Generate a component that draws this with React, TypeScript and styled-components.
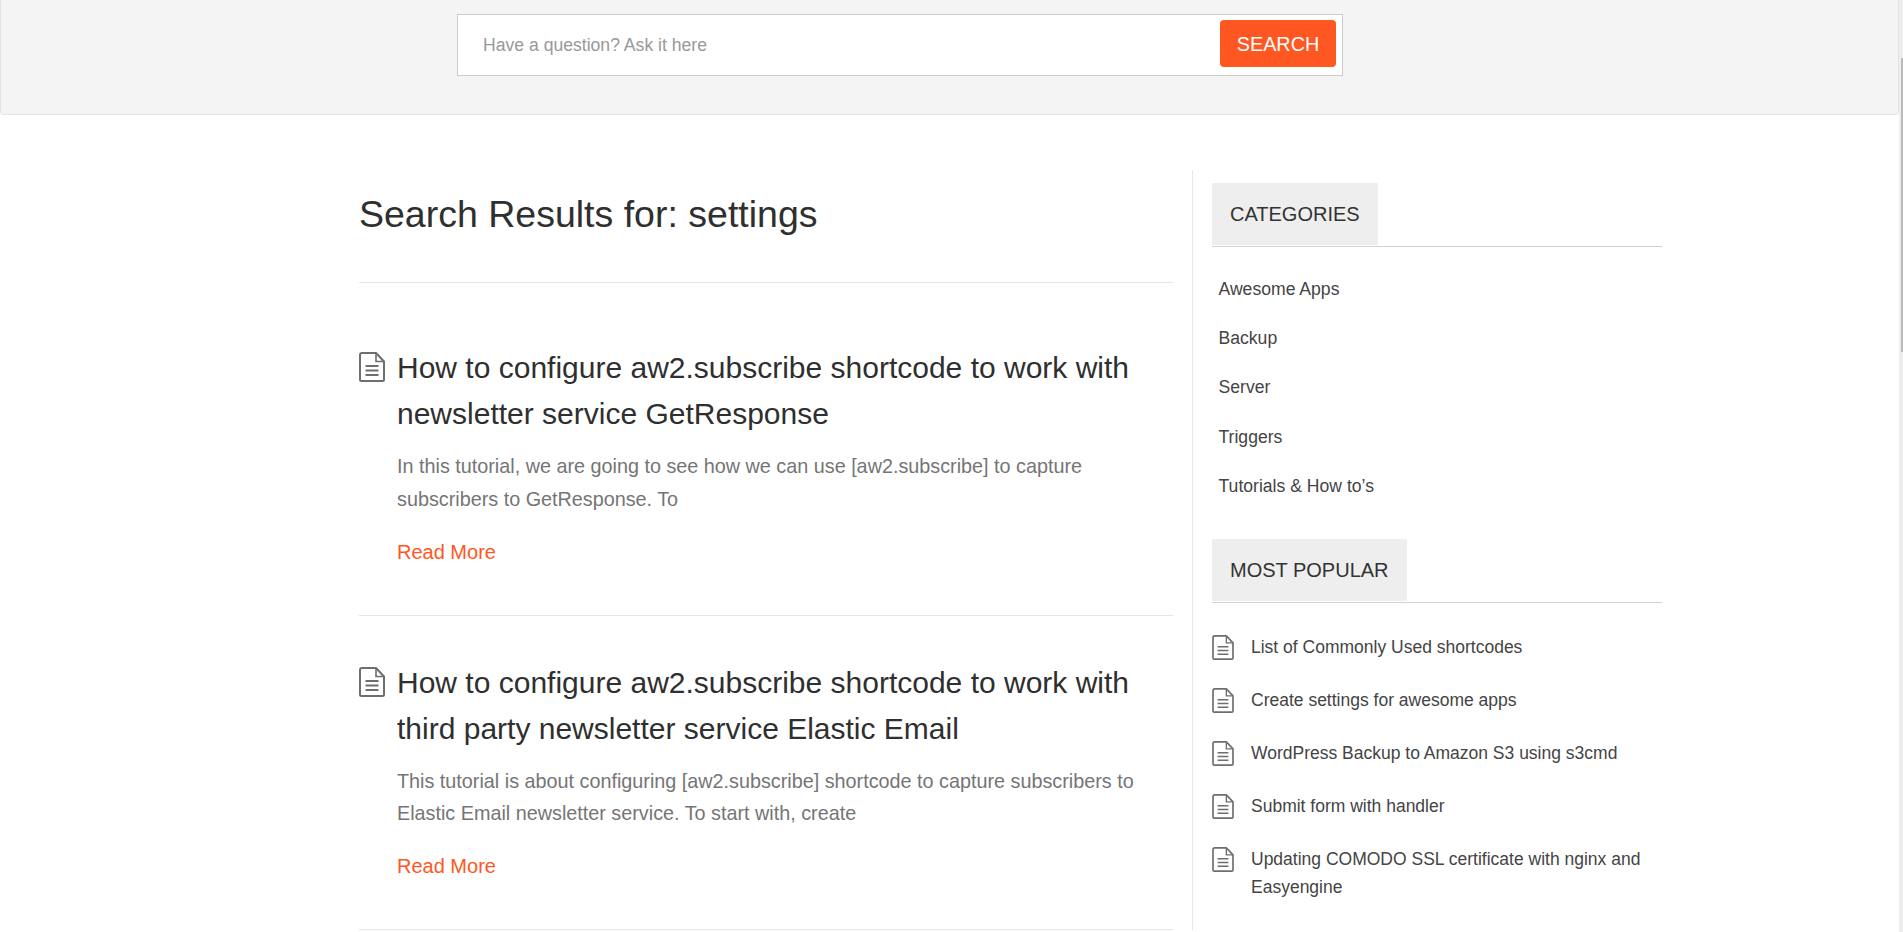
import React from "react";
import styled, { createGlobalStyle } from "styled-components";

const Global = createGlobalStyle`
  html, body { margin: 0; padding: 0; height: 932px; overflow: hidden; background: #fff; }
  body { font-family: "Liberation Sans", Arial, sans-serif; color: #333; }
`;

const Page = styled.div`
  position: relative;
  height: 932px;
  overflow: hidden;
`;

const ScrollTrack = styled.div`
  position: absolute;
  top: 0;
  right: 0;
  bottom: 0;
  width: 4px;
  background: #eeeeee;
`;

const ScrollThumb = styled.div`
  position: absolute;
  top: 58px;
  right: 0;
  width: 2px;
  height: 294px;
  background: #bbbbbb;
`;

const Banner = styled.header`
  box-sizing: border-box;
  width: 1899px;
  height: 115px;
  padding: 14px 0 0 456px;
  background: #f4f4f4;
  border: 1px solid #e3e3e3;
  border-top: 0;
  border-radius: 0 0 4px 4px;
  display: flex;
`;

const SearchForm = styled.form`
  box-sizing: border-box;
  width: 886px;
  height: 62px;
  background: #fff;
  border: 1px solid #ccc;
  display: flex;
  align-items: flex-start;
  justify-content: space-between;
  padding: 5px 6px 0 25px;
`;

const SearchInput = styled.input`
  flex: 1;
  height: 47px;
  margin-top: 2px;
  border: 0;
  outline: 0;
  background: transparent;
  font: 17.6px "Liberation Sans", Arial, sans-serif;
  color: #333;
  padding: 0;
  &::placeholder { color: #999; opacity: 1; }
`;

const SearchButton = styled.button`
  width: 116px;
  height: 47px;
  border: 0;
  border-radius: 4px;
  background: #ff5722;
  color: #fff;
  font: 19.8px "Liberation Sans", Arial, sans-serif;
  padding: 1px 0 0;
`;

const Layout = styled.div`
  display: flex;
  width: 1303px;
  margin: 55px 0 0 359px;
`;

const Main = styled.main`
  width: 814px;
  margin-right: 19px;
`;

const PageTitle = styled.h1`
  margin: 0 0 18px;
  padding: 24px 0 48px;
  font-size: 37.5px;
  line-height: 40px;
  font-weight: 400;
  color: #2f2f2f;
  border-bottom: 1px solid #e6e6e6;
`;

const Result = styled.article`
  position: relative;
  padding: 44px 0 48px 38px;
  border-bottom: 1px solid #e6e6e6;
`;

const ResultIcon = styled.span`
  position: absolute;
  left: 0;
  top: 51px;
  line-height: 0;
`;

const ResultTitle = styled.h2`
  margin: 0 0 13px;
  font-size: 30px;
  line-height: 46px;
  font-weight: 400;
  color: #2f2f2f;
`;

const Excerpt = styled.p`
  margin: 0 0 21px;
  font-size: 19.8px;
  line-height: 32.8px;
  color: #757575;
`;

const ReadMore = styled.a`
  display: block;
  font-size: 20px;
  line-height: 30px;
  color: #ff5722;
`;

const Sidebar = styled.aside`
  flex: 1;
  border-left: 1px solid #e6e6e6;
  padding: 13px 0 0 19px;
`;

const WidgetHead = styled.div`
  border-bottom: 1px solid #d2d2d2;
  margin-bottom: 18px;
`;

const WidgetTitle = styled.h3`
  display: inline-block;
  vertical-align: top;
  margin: 0 0 1px;
  padding: 0 18px;
  height: 62px;
  background: #eeeeee;
  font-size: 20px;
  line-height: 62px;
  font-weight: 400;
  color: #333;
`;

const CategoryList = styled.ul`
  list-style: none;
  margin: 0 0 28px;
  padding: 0 0 0 6.5px;
`;

const CategoryItem = styled.li`
  font-size: 17.6px;
  line-height: 49.2px;
  color: #444;
`;

const PopularList = styled.ul`
  list-style: none;
  margin: 0;
  padding: 0;
`;

const PopularItem = styled.li`
  display: flex;
  gap: 17px;
  padding: 12px 0 13px;
  font-size: 17.5px;
  line-height: 28px;
  color: #444;
`;

const PopularIcon = styled.span`
  flex: none;
  line-height: 0;
  padding-top: 2px;
`;

const DocIcon = ({ width, height }: { width: number; height: number }) => (
  <svg width={width} height={height} viewBox="0 0 26 30" fill="none" stroke="#6e6e6e">
    <path
      d="M3 1H17L25 9.5V27.5Q25 29 23.5 29H2.5Q1 29 1 27.5V3Q1 1 3 1Z"
      strokeWidth="2"
      strokeLinejoin="round"
    />
    <path d="M17 1V9.5H25" strokeWidth="1.6" />
    <path d="M6.5 14H19.5M6.5 18.5H19.5M6.5 23H19.5" strokeWidth="1.8" />
  </svg>
);

const results = [
  {
    title: "How to configure aw2.subscribe shortcode to work with newsletter service GetResponse",
    text: "In this tutorial, we are going to see how we can use [aw2.subscribe] to capture subscribers to GetResponse. To",
  },
  {
    title: "How to configure aw2.subscribe shortcode to work with third party newsletter service Elastic Email",
    text: "This tutorial is about configuring [aw2.subscribe] shortcode to capture subscribers to Elastic Email newsletter service. To start with, create",
  },
];

const categories = ["Awesome Apps", "Backup", "Server", "Triggers", "Tutorials & How to’s"];
const popular = [
  "List of Commonly Used shortcodes",
  "Create settings for awesome apps",
  "WordPress Backup to Amazon S3 using s3cmd",
  "Submit form with handler",
  "Updating COMODO SSL certificate with nginx and Easyengine",
];

export default function App() {
  return (
    <Page>
      <Global />
      <Banner>
        <SearchForm>
          <SearchInput placeholder="Have a question? Ask it here" />
          <SearchButton type="button">SEARCH</SearchButton>
        </SearchForm>
      </Banner>
      <Layout>
        <Main>
          <PageTitle>Search Results for: settings</PageTitle>
          {results.map((r) => (
            <Result key={r.title}>
              <ResultIcon><DocIcon width={26} height={30} /></ResultIcon>
              <ResultTitle>{r.title}</ResultTitle>
              <Excerpt>{r.text}</Excerpt>
              <ReadMore>Read More</ReadMore>
            </Result>
          ))}
        </Main>
        <Sidebar>
          <WidgetHead><WidgetTitle>CATEGORIES</WidgetTitle></WidgetHead>
          <CategoryList>
            {categories.map((c) => <CategoryItem key={c}>{c}</CategoryItem>)}
          </CategoryList>
          <WidgetHead><WidgetTitle>MOST POPULAR</WidgetTitle></WidgetHead>
          <PopularList>
            {popular.map((p) => (
              <PopularItem key={p}>
                <PopularIcon><DocIcon width={22} height={25} /></PopularIcon>
                {p}
              </PopularItem>
            ))}
          </PopularList>
        </Sidebar>
      </Layout>
      <ScrollTrack><ScrollThumb /></ScrollTrack>
    </Page>
  );
}
